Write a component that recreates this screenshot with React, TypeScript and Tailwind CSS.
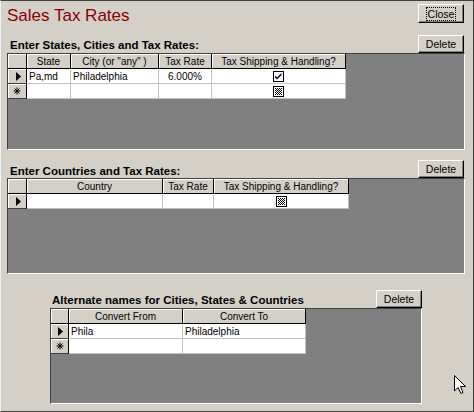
import React, { useId } from "react";

type Col = { w: string; label: string };
type Cell = { text?: string; align?: "left" | "center"; check?: "on" | "null" };
type Row = { sel: "current" | "new"; cells: Cell[] };

function Triangle() {
  return (
    <svg width="5" height="9" viewBox="0 0 5 9" className="ml-[2px]">
      <polygon points="0,0 5,4.5 0,9" fill="#000" />
    </svg>
  );
}

function Asterisk() {
  return (
    <svg width="8" height="8" viewBox="0 0 8 8">
      <path d="M4 0.5 V7.5 M0.5 4 H7.5 M1.5 1.5 L6.5 6.5 M6.5 1.5 L1.5 6.5" stroke="#000" strokeWidth="1" fill="none" />
    </svg>
  );
}

function CheckBox({ state }: { state: "on" | "null" }) {
  const id = useId().replace(/:/g, "");
  return (
    <svg width="11" height="11" viewBox="0 0 11 11">
      <defs>
        <pattern id={`p${id}`} width="2" height="2" patternUnits="userSpaceOnUse">
          <rect width="2" height="2" fill="#fff" />
          <rect width="1" height="1" fill="#000" />
          <rect x="1" y="1" width="1" height="1" fill="#000" />
        </pattern>
      </defs>
      <rect x="0.5" y="0.5" width="10" height="10" fill="#fff" stroke="#000" />
      {state === "on" ? (
        <polygon points="2,4.5 4,6.5 8.5,2 8.5,4 4,8.5 2,6.5" fill="#000" />
      ) : (
        <rect x="2" y="2" width="7" height="7" fill={`url(#p${id})`} />
      )}
    </svg>
  );
}

function Grid({ sel, cols, rows }: { sel: string; cols: Col[]; rows: Row[] }) {
  return (
    <div className="flex flex-col">
      <div className="flex">
        <div className={`${sel} h-[15px] bg-[#d4d0c8] border-r border-b border-black shadow-[inset_1px_1px_0_#fff]`} />
        {cols.map((c, i) => (
          <div
            key={i}
            className={`${c.w} h-[15px] bg-[#d4d0c8] border-r border-b border-black shadow-[inset_1px_1px_0_#fff] flex items-center justify-center pt-[1px] text-[10px] leading-none whitespace-nowrap overflow-hidden`}
          >
            {c.label}
          </div>
        ))}
      </div>
      {rows.map((r, ri) => (
        <div key={ri} className="flex">
          <div
            className={`${sel} h-[15px] bg-[#d4d0c8] border-r border-b border-r-black border-b-[#404040] shadow-[inset_1px_1px_0_#fff] flex items-center justify-center`}
          >
            {r.sel === "current" ? <Triangle /> : <Asterisk />}
          </div>
          {cols.map((c, ci) => {
            const cell = r.cells[ci] || {};
            return (
              <div
                key={ci}
                className={`${c.w} h-[15px] bg-white border-r border-b border-[#c0c0c0] flex items-center ${
                  cell.align === "center" || cell.check ? "justify-center" : "justify-start"
                } ${cell.check ? "" : "pt-[2px]"} px-[2px] text-[10px] leading-none whitespace-nowrap overflow-hidden`}
              >
                {cell.check ? <CheckBox state={cell.check} /> : cell.text}
              </div>
            );
          })}
        </div>
      ))}
    </div>
  );
}

function Button({ children, className }: { children: React.ReactNode; className: string }) {
  return (
    <div
      className={`${className} bg-[#d4d0c8] border border-t-white border-l-white border-r-black border-b-black shadow-[inset_-1px_-1px_0_#808080] flex items-center justify-center text-[10.5px] leading-none text-black`}
    >
      {children}
    </div>
  );
}

const Sub = ({ className, children }: { className: string; children: React.ReactNode }) => (
  <div className={`${className} bg-[#808080] border border-t-[#404040] border-l-[#404040] border-r-white border-b-white`}>
    {children}
  </div>
);

export default function App() {
  return (
    <div className="relative w-[474px] h-[412px] overflow-hidden bg-[#d4d0c8] border border-t-[#404040] border-r-[#404040] border-b-[#404040] border-l-[#f0f0f0] font-['Liberation_Sans',Arial,sans-serif] text-black">
      <div className="flex justify-between items-start h-[22px] pl-[6px] pr-[9px] pt-[3px]">
        <h1 className="text-[17px] leading-[20px] mt-[2px] text-[#8b0000]">Sales Tax Rates</h1>
        <Button className="w-[46px] h-[19px]">
          <span className="border border-dotted border-black px-[1px] py-[1px] leading-[10px]">Close</span>
        </Button>
      </div>

      <div className="mt-[12px] flex items-end justify-between pl-[9px] pr-[9px]">
        <div className="text-[11.5px] leading-[14px] font-bold mb-[1px]">Enter States, Cities and Tax Rates:</div>
        <Button className="w-[46px] h-[18px]">Delete</Button>
      </div>
      <Sub className="ml-[6px] w-[458px] h-[97px]">
        <Grid
          sel="w-[19px]"
          cols={[
            { w: "w-[44px]", label: "State" },
            { w: "w-[88px]", label: 'City (or "any" )' },
            { w: "w-[53px]", label: "Tax Rate" },
            { w: "w-[134px]", label: "Tax Shipping & Handling?" },
          ]}
          rows={[
            {
              sel: "current",
              cells: [{ text: "Pa,md" }, { text: "Philadelphia" }, { text: "6.000%", align: "center" }, { check: "on" }],
            },
            { sel: "new", cells: [{}, {}, {}, { check: "null" }] },
          ]}
        />
      </Sub>

      <div className="mt-[10px] flex items-end justify-between pl-[9px] pr-[9px]">
        <div className="text-[11.5px] leading-[14px] font-bold">Enter Countries and Tax Rates:</div>
        <Button className="w-[46px] h-[18px]">Delete</Button>
      </div>
      <Sub className="ml-[6px] w-[458px] h-[96px]">
        <Grid
          sel="w-[19px]"
          cols={[
            { w: "w-[136px]", label: "Country" },
            { w: "w-[51px]", label: "Tax Rate" },
            { w: "w-[135px]", label: "Tax Shipping & Handling?" },
          ]}
          rows={[{ sel: "current", cells: [{}, {}, { check: "null" }] }]}
        />
      </Sub>

      <div className="mt-[16px] flex items-end justify-between pl-[51px] pr-[51px]">
        <div className="text-[11.5px] leading-[14px] font-bold mb-[1px]">Alternate names for Cities, States &amp; Countries</div>
        <Button className="w-[46px] h-[18px]">Delete</Button>
      </div>
      <Sub className="ml-[49px] w-[372px] h-[96px]">
        <Grid
          sel="w-[18px]"
          cols={[
            { w: "w-[114px]", label: "Convert From" },
            { w: "w-[123px]", label: "Convert To" },
          ]}
          rows={[
            { sel: "current", cells: [{ text: "Phila" }, { text: "Philadelphia" }] },
            { sel: "new", cells: [{}, {}] },
          ]}
        />
      </Sub>

      <svg className="absolute left-[453px] top-[374px]" width="13" height="20" viewBox="0 0 13 20">
        <polygon points="0.5,0.5 0.5,16 4,12.5 7,18.5 9,17.5 6.5,11.5 11.5,11.5" fill="#fff" stroke="#000" strokeWidth="1" />
      </svg>
    </div>
  );
}
